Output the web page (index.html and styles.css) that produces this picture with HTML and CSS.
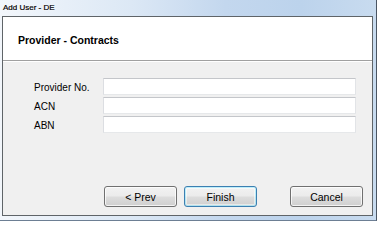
FILE: index.html
```html
<!DOCTYPE html>
<html>
<head>
<meta charset="utf-8">
<link rel="stylesheet" href="styles.css">
</head>
<body>
<div class="window">
  <div class="titlebar">Add User - DE</div>
  <div class="client">
    <div class="header">Provider - Contracts</div>
    <div class="content">
      <div class="form">
        <label class="lbl">Provider No.</label><div class="input"></div>
        <label class="lbl">ACN</label><div class="input"></div>
        <label class="lbl">ABN</label><div class="input"></div>
      </div>
      <div class="buttons">
        <button class="btn">&lt; Prev</button>
        <button class="btn default">Finish</button>
        <button class="btn cancel">Cancel</button>
      </div>
    </div>
  </div>
</div>
</body>
</html>
```

FILE: styles.css
```css
html, body {
  margin: 0;
  padding: 0;
}
body {
  font-family: "Liberation Sans", Arial, sans-serif;
  font-size: 10px;
  color: #000;
}
.window {
  width: 377px;
  height: 221px;
  box-sizing: border-box;
  display: flex;
  flex-direction: column;
  background: linear-gradient(to right, #f2f6fb 0%, #dce8f5 35%, #c3d7ee 60%, #bcd3ec 80%, #c8dbef 100%);
  border-right: 1px solid #4a5563;
  border-bottom: 1px solid #6d7f94;
}
.titlebar {
  height: 16px;
  line-height: 16px;
  padding-left: 3px;
  font-size: 8px;
  font-family: "Liberation Sans", Arial, sans-serif;
  color: #000;
  -webkit-text-stroke: 0.2px #000;
  text-shadow: 0 0 3px #fff, 0 0 2px #fff;
}
.client {
  margin: 0 3px 4px 2px;
  flex: 1;
  border: 1px solid #5f6468;
  display: flex;
  flex-direction: column;
  background: #f0f0f0;
}
.header {
  height: 44px;
  background: #fff;
  border-bottom: 1px solid #a0a0a0;
  box-shadow: 0 1px 0 #fff;
  display: flex;
  align-items: center;
  padding-left: 15px;
  padding-top: 2px;
  box-sizing: border-box;
  font-weight: bold;
  font-size: 10.5px;
}
.content {
  flex: 1;
  display: flex;
  flex-direction: column;
  padding: 17px 9px 8px 31px;
}
.form {
  display: grid;
  grid-template-columns: 69px 253px;
  grid-auto-rows: 17px;
  row-gap: 1.75px;
}
.lbl {
  line-height: 20px;
  height: 17px;
}
.input {
  height: 17px;
  box-sizing: border-box;
  background: #fff;
  border: 1px solid;
  border-color: #c4c6ca #e2e4e7 #e6e8ea #dcdee2;
}
.buttons {
  margin-top: auto;
  display: flex;
  gap: 7px;
  padding-left: 70px;
}
.btn {
  width: 73px;
  height: 21px;
  box-sizing: border-box;
  margin: 0;
  padding: 0;
  font-family: "Liberation Sans", Arial, sans-serif;
  font-size: 10.5px;
  color: #000;
  border: 1px solid #707070;
  border-radius: 3px;
  background: linear-gradient(to bottom, #f2f2f2 0%, #ebebeb 48%, #dddddd 52%, #cfcfcf 100%);
  box-shadow: inset 0 0 0 1px rgba(255,255,255,0.75);
}
.btn.default {
  border-color: #3c7fb1;
  box-shadow: inset 0 0 0 1px #48d7fb55, inset 0 0 0 2px rgba(255,255,255,0.5);
}
.btn.cancel {
  margin-left: auto;
}
```
